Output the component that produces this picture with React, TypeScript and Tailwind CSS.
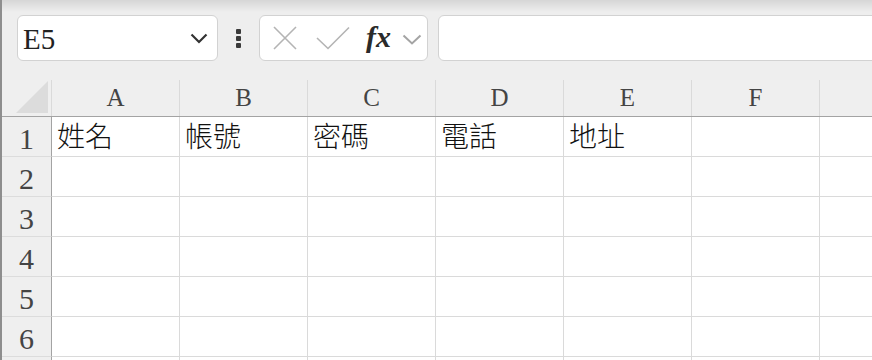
import React from 'react'

const serif = "font-['Liberation_Serif','Noto_Sans_CJK_TC',serif]"
// G is only partly on screen, so its label is left out
const columns = ['A', 'B', 'C', 'D', 'E', 'F', '']
const rows: string[][] = [
  ['姓名', '帳號', '密碼', '電話', '地址', '', ''],
  ['', '', '', '', '', '', ''],
  ['', '', '', '', '', '', ''],
  ['', '', '', '', '', '', ''],
  ['', '', '', '', '', '', ''],
  ['', '', '', '', '', '', ''],
  ['', '', '', '', '', '', ''],
]

function Toolbar() {
  return (
    <div className="h-[80px] shrink-0 flex items-start pt-[15px] pl-[15px] bg-[linear-gradient(#d6d6d6,#eeeeee_12px)]">
      {/* Name box */}
      <div className="w-[201px] h-[46px] shrink-0 rounded-[6px] border border-[#d2d2d2] bg-white flex items-center justify-between pl-[5px] pr-[9px]">
        <span className={`${serif} text-[29px] leading-none text-[#222] pt-[2px]`}>E5</span>
        <svg width="18" height="11" viewBox="0 0 18 11">
          <path d="M1.5 1.5 L9 9 L16.5 1.5" fill="none" stroke="#333" strokeWidth="2.2" />
        </svg>
      </div>

      {/* More dots */}
      <div className="ml-[18px] mt-[14px] flex flex-col gap-[2px]">
        <div className="w-[5px] h-[5px] bg-[#3a3a3a] rounded-[1px]" />
        <div className="w-[5px] h-[5px] bg-[#3a3a3a] rounded-[1px]" />
        <div className="w-[5px] h-[5px] bg-[#3a3a3a] rounded-[1px]" />
      </div>

      {/* Cancel / enter / function */}
      <div className="ml-[18px] w-[169px] h-[46px] shrink-0 rounded-[6px] border border-[#d2d2d2] bg-white flex items-center pl-[13px]">
        <svg width="24" height="24" viewBox="0 0 24 24">
          <path d="M1 1 L23 23 M23 1 L1 23" fill="none" stroke="#b4b4b4" strokeWidth="1.6" />
        </svg>
        <svg className="ml-[19px]" width="34" height="24" viewBox="0 0 34 24">
          <path d="M1 12 L12 22.5 L33 1.5" fill="none" stroke="#b4b4b4" strokeWidth="1.6" />
        </svg>
        <span className={`ml-[16px] ${serif} italic font-bold text-[30px] leading-none text-[#2a2a2a] pb-[2px]`}>
          fx
        </span>
        <svg className="ml-[11px] mt-[2px]" width="20" height="11" viewBox="0 0 20 11">
          <path d="M1.5 1.5 L10 9.5 L18.5 1.5" fill="none" stroke="#a4a4a4" strokeWidth="2" />
        </svg>
      </div>

      {/* Formula input */}
      <div className="ml-[10px] w-[460px] h-[46px] shrink-0 rounded-l-[6px] border border-[#d2d2d2] bg-white" />
    </div>
  )
}

function ColumnHeader() {
  return (
    <div className="flex h-[37px] shrink-0 border-b border-[#a3a3a3]">
      <div className="w-[50px] shrink-0 border-r border-[#dadada] flex items-end justify-end p-[3px]">
        <svg width="32" height="32" viewBox="0 0 32 32">
          <path d="M32 0 L32 32 L0 32 Z" fill="#dcdcdc" />
        </svg>
      </div>
      {columns.map((c, i) => (
        <div
          key={i}
          className={`w-[128px] shrink-0 border-r border-[#dadada] flex items-center justify-center ${serif} text-[25px] text-[#444]`}
        >
          {c}
        </div>
      ))}
    </div>
  )
}

export default function App() {
  return (
    <div className="w-[872px] h-[360px] overflow-hidden flex flex-col bg-[#efefef] border-l-2 border-[#8e8e8e]">
      <Toolbar />
      <ColumnHeader />
      {rows.map((row, i) => (
        <div key={i} className="flex h-[40px] shrink-0">
          <div
            className={`w-[50px] shrink-0 border-r border-b border-r-[#a3a3a3] border-b-[#dcdcdc] flex items-center justify-center pt-[3px] ${serif} text-[30px] text-[#444]`}
          >
            {i < 6 ? i + 1 : ''}
          </div>
          {row.map((text, j) => (
            <div
              key={j}
              className={`w-[128px] shrink-0 bg-white border-r border-b border-[#dadada] flex items-center pl-[5px] pt-[3px] ${serif} font-light text-[28px] text-[#111] whitespace-nowrap`}
            >
              {text}
            </div>
          ))}
        </div>
      ))}
    </div>
  )
}
